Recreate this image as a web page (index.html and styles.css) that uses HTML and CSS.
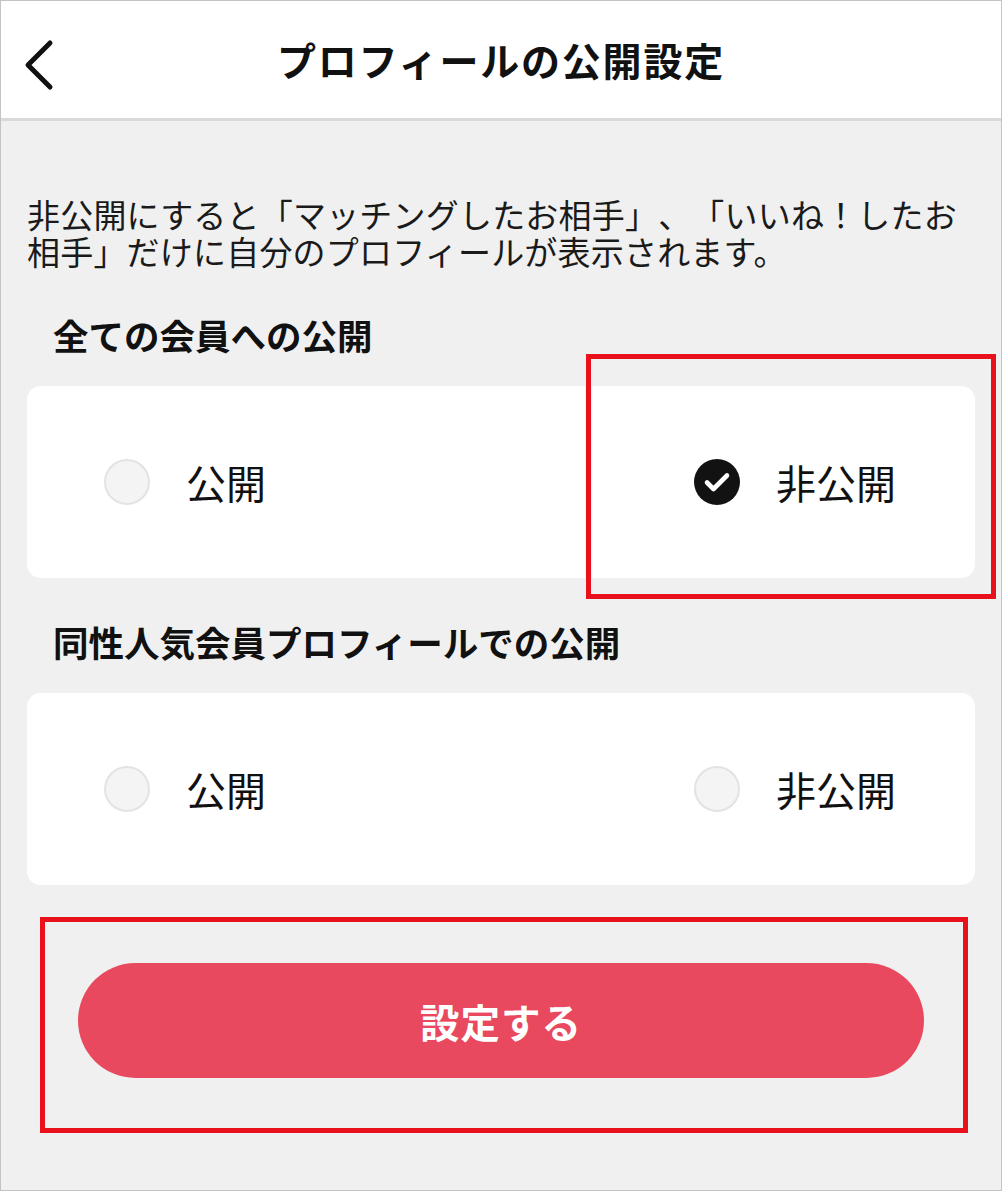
FILE: index.html
```html
<!DOCTYPE html>
<html lang="ja">
<head>
<meta charset="utf-8">
<title>プロフィールの公開設定</title>
<link rel="stylesheet" href="styles.css">
</head>
<body>
<div class="frame">
  <header class="topbar">
    <svg class="back" width="34" height="52" viewBox="0 0 34 52" aria-hidden="true">
      <path d="M27 4 L5 26 L27 48" fill="none" stroke="#111" stroke-width="5" stroke-linecap="round" stroke-linejoin="round"/>
    </svg>
    <h1 class="title">プロフィールの公開設定</h1>
  </header>
  <main class="content">
    <p class="desc">非公開にすると「マッチングしたお相手」、「いいね！したお相手」だけに自分のプロフィールが表示されます。</p>

    <h2 class="heading heading-first">全ての会員への公開</h2>
    <div class="card">
      <div class="option">
        <span class="radio"></span>
        <span class="label">公開</span>
      </div>
      <div class="option">
        <span class="radio radio-on">
          <svg width="46" height="46" viewBox="0 0 46 46" aria-hidden="true">
            <path d="M13 23.5 L19.5 30 L33 16.5" fill="none" stroke="#fff" stroke-width="4.6" stroke-linecap="round" stroke-linejoin="round"/>
          </svg>
        </span>
        <span class="label">非公開</span>
      </div>
      <div class="mark mark-option"></div>
    </div>

    <h2 class="heading">同性人気会員プロフィールでの公開</h2>
    <div class="card">
      <div class="option">
        <span class="radio"></span>
        <span class="label">公開</span>
      </div>
      <div class="option">
        <span class="radio"></span>
        <span class="label">非公開</span>
      </div>
    </div>

    <div class="action">
      <button class="submit" type="button">設定する</button>
      <div class="mark mark-button"></div>
    </div>
  </main>
</div>
</body>
</html>
```

FILE: styles.css
```css
* {
  box-sizing: border-box;
}

html, body {
  margin: 0;
  padding: 0;
  background: #f0f0f0;
}

body {
  font-family: "Noto Sans CJK JP", "Noto Sans", sans-serif;
  color: #1a1a1a;
  text-spacing-trim: space-all;
}

.frame {
  width: 1002px;
  height: 1191px;
  border: 1px solid #c4c4c4;
  background: #f0f0f0;
  overflow: hidden;
}

.topbar {
  position: relative;
  height: 120px;
  background: #fff;
  border-bottom: 3px solid #d9d9d9;
  display: flex;
  align-items: center;
  justify-content: center;
}

.back {
  position: absolute;
  left: 22px;
  top: 38px;
}

.title {
  margin: 0;
  font-size: 39px;
  font-weight: 700;
  line-height: 1;
  color: #111;
  letter-spacing: 1.8px;
}

.content {
  padding: 0 26px;
}

.desc {
  margin: 0;
  padding-top: 75px;
  font-size: 33px;
  line-height: 37px;
  color: #1a1a1a;
  letter-spacing: 0.2px;
}

.heading {
  margin: 42px 0 0;
  padding-left: 26px;
  font-size: 35.5px;
  line-height: 44px;
  font-weight: 700;
  color: #111;
}

.heading-first {
  margin-top: 43px;
}

.card {
  position: relative;
  margin-top: 29px;
  height: 192px;
  background: #fff;
  border-radius: 14px;
  display: flex;
  align-items: center;
  justify-content: space-between;
  padding: 0 79px 0 77px;
}

.option {
  display: flex;
  align-items: center;
  gap: 36px;
}

.radio {
  width: 46px;
  height: 46px;
  border-radius: 50%;
  background: #f4f4f4;
  border: 2px solid #e3e3e3;
  display: block;
  flex: none;
}

.radio-on {
  background: #121212;
  border: none;
}

.radio-on svg {
  display: block;
}

.label {
  font-size: 40px;
  line-height: 1;
  color: #111;
}

.action {
  position: relative;
  margin: 78px 51px 0;
}

.submit {
  display: block;
  width: 100%;
  height: 115px;
  border: none;
  border-radius: 58px;
  background: #e9495e;
  color: #fff;
  font-family: "Noto Sans CJK JP", "Noto Sans", sans-serif;
  font-size: 39.5px;
  font-weight: 700;
  letter-spacing: 1px;
  padding: 0;
}

.mark {
  position: absolute;
  border: 5px solid #e8111c;
  box-shadow: 0 0 0 1px #eef4f4, inset 0 0 0 1px #eef4f4;
  pointer-events: none;
}

.mark-option {
  top: -32px;
  left: 559px;
  right: -21px;
  bottom: -21px;
}

.mark-button {
  top: -46px;
  left: -38px;
  right: -44px;
  bottom: -55px;
}
```
